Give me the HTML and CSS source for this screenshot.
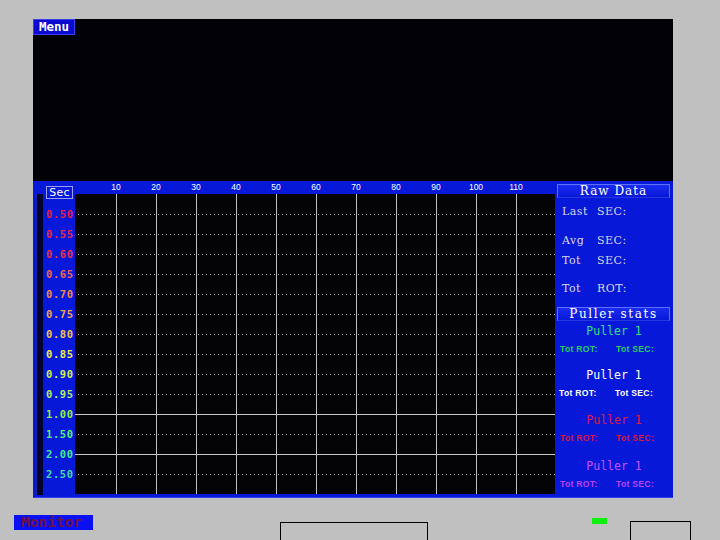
FILE: index.html
```html
<!DOCTYPE html>
<html>
<head>
<meta charset="utf-8">
<link rel="stylesheet" href="styles.css">
</head>
<body>
<div class="app">
  <div class="main">
    <div class="top">
      <div class="menu">Menu</div>
    </div>
    <div class="panel">
      <div class="strip"></div>
      <div class="labels">
        <div class="sec">Sec</div>
        <div class="lbls">
          <div class="lbl c1">0.50</div>
          <div class="lbl c2">0.55</div>
          <div class="lbl c3">0.60</div>
          <div class="lbl c4">0.65</div>
          <div class="lbl c5">0.70</div>
          <div class="lbl c6">0.75</div>
          <div class="lbl c7">0.80</div>
          <div class="lbl c8">0.85</div>
          <div class="lbl c9">0.90</div>
          <div class="lbl c10">0.95</div>
          <div class="lbl c11">1.00</div>
          <div class="lbl c12">1.50</div>
          <div class="lbl c13">2.00</div>
          <div class="lbl c14">2.50</div>
        </div>
      </div>
      <div class="chartcol">
        <div class="ticks">
          <span>10</span><span>20</span><span>30</span><span>40</span><span>50</span><span>60</span><span>70</span><span>80</span><span>90</span><span>100</span><span>110</span>
        </div>
        <div class="chart">
          <div class="row"></div>
          <div class="row"></div>
          <div class="row"></div>
          <div class="row"></div>
          <div class="row"></div>
          <div class="row"></div>
          <div class="row"></div>
          <div class="row"></div>
          <div class="row"></div>
          <div class="row"></div>
          <div class="row solid"></div>
          <div class="row"></div>
          <div class="row solid"></div>
          <div class="row"></div>
          <div class="vgrid">
            <div class="vl"></div><div class="vl"></div><div class="vl"></div><div class="vl"></div><div class="vl"></div><div class="vl"></div><div class="vl"></div><div class="vl"></div><div class="vl"></div><div class="vl"></div><div class="vl"></div>
          </div>
        </div>
      </div>
      <div class="side">
        <div class="hbox">Raw Data</div>
        <div class="raw r1"><span class="k">Last</span><span>SEC:</span></div>
        <div class="raw r2"><span class="k">Avg</span><span>SEC:</span></div>
        <div class="raw r3"><span class="k">Tot</span><span>SEC:</span></div>
        <div class="raw r4"><span class="k">Tot</span><span>ROT:</span></div>
        <div class="hbox stats">Puller stats</div>
        <div class="puller p-green g1">
          <div class="ph">Puller 1</div>
          <div class="pt"><span>Tot ROT:</span><span>Tot SEC:</span></div>
        </div>
        <div class="puller p-white g2">
          <div class="ph">Puller 1</div>
          <div class="pt"><span>Tot ROT:</span><span>Tot SEC:</span></div>
        </div>
        <div class="puller p-red g3">
          <div class="ph">Puller 1</div>
          <div class="pt"><span>Tot ROT:</span><span>Tot SEC:</span></div>
        </div>
        <div class="puller p-mag g4">
          <div class="ph">Puller 1</div>
          <div class="pt"><span>Tot ROT:</span><span>Tot SEC:</span></div>
        </div>
      </div>
    </div>
  </div>
  <div class="status">
    <div class="monitor">Monitor</div>
    <div class="box1"></div>
    <div class="led"></div>
    <div class="box2"></div>
  </div>
</div>
</body>
</html>
```

FILE: styles.css
```css
html, body {
  margin: 0;
  padding: 0;
  background: #c0c0c0;
}
.app {
  width: 720px;
  height: 540px;
  overflow: hidden;
  padding-top: 19px;
  box-sizing: border-box;
  background: #c0c0c0;
}
.main {
  margin-left: 33px;
  width: 640px;
}
.top {
  height: 162px;
  background: #020206;
}
.menu {
  width: 42px;
  height: 16px;
  box-sizing: border-box;
  background: #0a0ad0;
  border: 1px solid #3a40e8;
  color: #ffffff;
  font-family: "DejaVu Sans Mono", monospace;
  font-weight: bold;
  font-size: 12.5px;
  line-height: 14px;
  padding-left: 5px;
}
.panel {
  display: flex;
  height: 317px;
  box-sizing: border-box;
  padding: 0 0 3px 3px;
  background: #0818d8;
  border-bottom: 1px solid #3040f0;
}
.strip {
  width: 7px;
  margin-top: 13px;
  height: 301px;
  box-sizing: border-box;
  background: #00002e;
  border-left: 1px solid #1424a8;
}
.labels {
  width: 32px;
}
.sec {
  margin: 5px 0 0 3px;
  width: 27px;
  height: 13px;
  box-sizing: border-box;
  border: 1px solid #9aa0f0;
  color: #ffffff;
  font-family: "DejaVu Sans", sans-serif;
  font-size: 11px;
  line-height: 11px;
  text-align: center;
  letter-spacing: 0.3px;
}
.lbls {
  margin-top: 5px;
}
.lbl {
  height: 20px;
  line-height: 20px;
  padding-left: 3px;
  font-family: "DejaVu Sans Mono", monospace;
  font-weight: bold;
  font-size: 10.5px;
  letter-spacing: 0.6px;
}
.c1 { color: #e8203c; }
.c2 { color: #e82a48; }
.c3 { color: #ea3444; }
.c4 { color: #f06a4a; }
.c5 { color: #f08a44; }
.c6 { color: #f0a448; }
.c7 { color: #f2c444; }
.c8 { color: #f0f040; }
.c9 { color: #d0f050; }
.c10 { color: #b0f060; }
.c11 { color: #90f040; }
.c12 { color: #58f070; }
.c13 { color: #40ea88; }
.c14 { color: #40dca4; }
.chartcol {
  width: 480px;
  display: flex;
  flex-direction: column;
}
.ticks {
  height: 13px;
  display: flex;
  padding-left: 21px;
  color: #ffffff;
  font-family: "Liberation Sans", sans-serif;
  font-size: 8.5px;
  line-height: 13px;
}
.ticks span {
  width: 40px;
  text-align: center;
}
.chart {
  position: relative;
  height: 301px;
  box-sizing: border-box;
  padding-top: 1px;
  background: #040406;
  overflow: hidden;
}
.row {
  height: 20px;
  background: repeating-linear-gradient(to right, #b4b4b4 0 1px, transparent 1px 4px) 3px 19px / 100% 1px no-repeat;
}
.row.solid {
  background: linear-gradient(#c8c8c8, #c8c8c8) 0 19px / 100% 1px no-repeat;
}
.vgrid {
  position: absolute;
  left: 0;
  top: 0;
  bottom: 0;
  right: 0;
  display: flex;
  padding-left: 41px;
}
.vl {
  width: 40px;
  flex: none;
  box-sizing: border-box;
  border-left: 1px solid #c0c0c0;
}
.side {
  width: 118px;
  display: flex;
  flex-direction: column;
}
.hbox {
  margin: 3px 3px 0 2px;
  height: 14px;
  box-sizing: border-box;
  border: 1px solid #6070ff;
  border-bottom-color: #2838e0;
  background: linear-gradient(#1a2cf0, #0818d8);
  color: #ffffff;
  font-family: "DejaVu Serif", serif;
  font-size: 12px;
  letter-spacing: 1px;
  line-height: 12px;
  text-align: center;
  white-space: nowrap;
}
.stats {
  margin-top: 13px;
  letter-spacing: 1.6px;
}
.raw {
  height: 14px;
  line-height: 14px;
  padding-left: 7px;
  color: #d8d8e0;
  font-family: "DejaVu Serif", serif;
  font-size: 11px;
  letter-spacing: 0.5px;
  display: flex;
}
.raw .k {
  width: 35px;
}
.r1 { margin-top: 7px; }
.r2 { margin-top: 15px; }
.r3 { margin-top: 6px; }
.r4 { margin-top: 14px; }
.stats { margin-top: 11px; }
.puller {
  display: flex;
  flex-direction: column;
}
.g1 { margin-top: 3px; }
.g2 { margin-top: 13px; }
.g3 { margin-top: 14px; }
.g4 { margin-top: 15px; }
.ph {
  height: 14px;
  line-height: 14px;
  text-align: center;
  font-family: "DejaVu Sans Mono", monospace;
  font-size: 11.5px;
}
.pt {
  margin-top: 5px;
  height: 12px;
  line-height: 12px;
  display: flex;
  padding-left: 5px;
  font-family: "Liberation Sans", sans-serif;
  font-weight: bold;
  font-size: 8.6px;
  letter-spacing: 0.3px;
}
.pt span {
  width: 56px;
}
.p-green .ph { color: #28e080; }
.p-green .pt { color: #20d060; }
.p-white .ph, .p-white .pt { color: #ffffff; }
.p-white .pt { padding-left: 4px; }
.p-red .ph { color: #e01840; }
.p-red .pt { color: #d81840; }
.p-mag .ph { color: #c850ff; }
.p-mag .pt { color: #c040f0; }
.status {
  display: flex;
  align-items: flex-start;
  height: 42px;
}
.monitor {
  margin: 17px 0 0 14px;
  width: 79px;
  height: 15px;
  box-sizing: border-box;
  padding-left: 7px;
  background: #0a10f4;
  color: #701040;
  font-family: "DejaVu Sans Mono", monospace;
  font-weight: bold;
  font-size: 14.5px;
  line-height: 15px;
  overflow: hidden;
}
.box1 {
  margin: 24px 0 0 187px;
  width: 148px;
  height: 30px;
  box-sizing: border-box;
  border: 1px solid #000000;
}
.led {
  margin: 20px 0 0 164px;
  width: 15px;
  height: 6px;
  background: #10f010;
}
.box2 {
  margin: 23px 0 0 23px;
  width: 61px;
  height: 30px;
  box-sizing: border-box;
  border: 1px solid #000000;
}
```
